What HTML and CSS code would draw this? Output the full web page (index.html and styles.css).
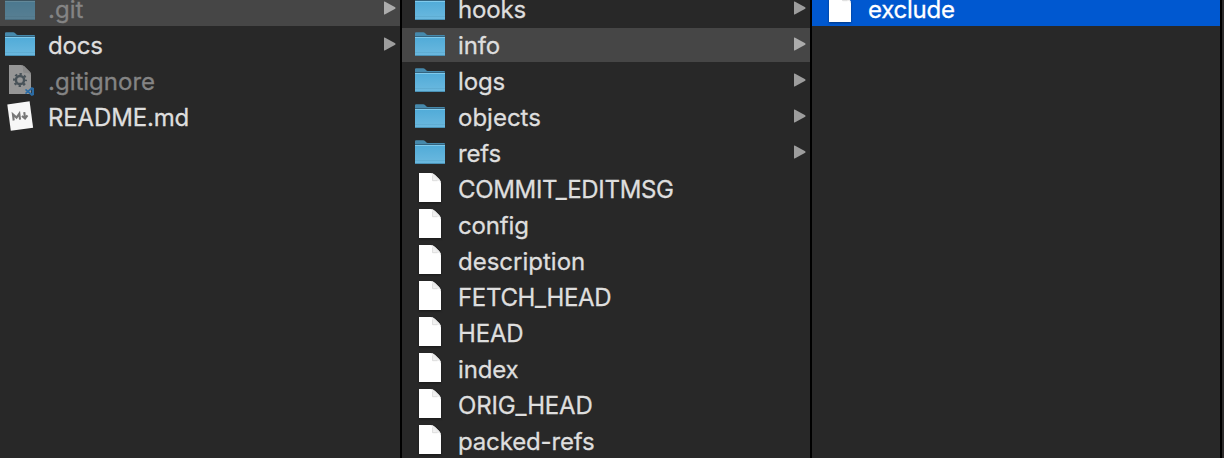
FILE: index.html
```
<!DOCTYPE html>
<html lang="en">
<head>
<meta charset="utf-8">
<title>Finder columns</title>
<link rel="stylesheet" href="styles.css">
</head>
<body>
<svg class="defs" aria-hidden="true">
  <defs>
    <linearGradient id="front" x1="0" y1="0" x2="0" y2="1"><stop offset="0" stop-color="#50abd8"/><stop offset="1" stop-color="#6cb9df"/></linearGradient>
    <linearGradient id="fold" x1="0" y1="1" x2="1" y2="0"><stop offset="0" stop-color="#fff"/><stop offset=".5" stop-color="#eee"/><stop offset="1" stop-color="#ccc"/></linearGradient>
  </defs>
  <symbol id="folder" viewBox="0 0 30 24">
    <path d="M0 1.2Q0 .2 1 .2H8.2Q9.2 .2 10 1L11.2 2.3Q11.8 2.9 12.8 2.9H29Q30 2.9 30 3.9V8H0Z" fill="#4689ac"/>
    <path d="M0 4H30V5H0Z" fill="#34647f"/>
    <path d="M0 5H30V23Q30 24 29 24H1Q0 24 0 23Z" fill="url(#front)"/>
    <path d="M0 5H30V6H0Z" fill="#7fcaec"/>
    <path d="M0 22.9H30V23Q30 24 29 24H1Q0 24 0 23Z" fill="#4a91b5"/>
    <path d="M0 20H30V20.6H0Z" fill="#5ba7cc"/>
  </symbol>
  <symbol id="file" viewBox="0 0 22 29">
    <path d="M0 0H11.5Q14 .1 16 2L20.3 6.3Q22 8 22 10.5V29H0Z" fill="#fff"/>
    <path d="M11.5 0Q14 .1 16 2L20.3 6.3Q21.8 7.8 22 10Q21 7.8 18.5 7.7H13.6V3Q13.6 .8 11.5 0Z" fill="url(#fold)"/>
    <path d="M13.6 2.5V7.7H18.5" fill="none" stroke="#d4d4d4" stroke-width=".8"/>
  </symbol>
  <symbol id="arrow" viewBox="0 0 12 14">
    <path d="M.7 .5L11.2 6.2Q12 7 11.2 7.8L.7 13.5Q0 13.8 0 13V1Q0 .2 .7 .5Z" fill="currentColor"/>
  </symbol>
</svg>
<main class="browser">
  <section class="column">
    <div class="row current"><span class="icon"><svg class="folder dim"><use href="#folder"/></svg></span><span class="name muted">.git</span><svg class="arrow"><use href="#arrow"/></svg></div>
    <div class="row"><span class="icon"><svg class="folder"><use href="#folder"/></svg></span><span class="name snug">docs</span><svg class="arrow"><use href="#arrow"/></svg></div>
    <div class="row"><span class="icon"><svg class="config" viewBox="0 0 26 32">
      <path d="M0 0H12Q14 0 15.5 1.5L21 7Q22 8.2 22 10V29H0Z" fill="#969696"/>
      <path d="M12 0Q14 0 15.5 1.5L21 7Q22 8.2 22 10Q20.5 8 18 8H16Q14 8 14 6V3Q14 1 12 0Z" fill="#8a8a8a"/>
      <g fill="none" stroke="#485258"><circle cx="11" cy="15" r="4.1" stroke-width="2.5"/><circle cx="11" cy="15" r="6" stroke-width="2" stroke-dasharray="2.36 2.352" stroke-dashoffset="1.18"/></g>
      <path d="M22.7 22L25 23.1V29.9L22.7 31L16.2 25.3V24.6L17.2 23.9L22.7 28.4V24.6L17.2 29.1L16.2 28.4V27.7Z" fill="#2a6ca6"/>
    </svg></span><span class="name muted">.gitignore</span></div>
    <div class="row"><span class="icon"><svg class="markdown" viewBox="0 0 28 31">
      <path d="M.3 3.4L22.6 .3L26.1 26.7L3.8 29.8Z" fill="#f7f7f7"/>
      <g transform="rotate(-7 13 15)" fill="none" stroke="#777" stroke-width="2.1"><path d="M6.2 18.7V12.6L9.4 16.2L12.6 12.6V18.7"/><path d="M17.7 11.6V17.5M14.9 15.2L17.7 18L20.5 15.2"/></g>
    </svg></span><span class="name snug">README.md</span></div>
  </section>
  <section class="column">
    <div class="row"><span class="icon"><svg class="folder"><use href="#folder"/></svg></span><span class="name snug">hooks</span><svg class="arrow"><use href="#arrow"/></svg></div>
    <div class="row current"><span class="icon"><svg class="folder"><use href="#folder"/></svg></span><span class="name snug">info</span><svg class="arrow"><use href="#arrow"/></svg></div>
    <div class="row"><span class="icon"><svg class="folder"><use href="#folder"/></svg></span><span class="name snug">logs</span><svg class="arrow"><use href="#arrow"/></svg></div>
    <div class="row"><span class="icon"><svg class="folder"><use href="#folder"/></svg></span><span class="name">objects</span><svg class="arrow"><use href="#arrow"/></svg></div>
    <div class="row"><span class="icon"><svg class="folder"><use href="#folder"/></svg></span><span class="name snug">refs</span><svg class="arrow"><use href="#arrow"/></svg></div>
    <div class="row"><span class="icon"><svg class="file"><use href="#file"/></svg></span><span class="name tight">COMMIT_EDITMSG</span></div>
    <div class="row"><span class="icon"><svg class="file"><use href="#file"/></svg></span><span class="name snug">config</span></div>
    <div class="row"><span class="icon"><svg class="file"><use href="#file"/></svg></span><span class="name">description</span></div>
    <div class="row"><span class="icon"><svg class="file"><use href="#file"/></svg></span><span class="name tight">FETCH_HEAD</span></div>
    <div class="row"><span class="icon"><svg class="file"><use href="#file"/></svg></span><span class="name snug">HEAD</span></div>
    <div class="row"><span class="icon"><svg class="file"><use href="#file"/></svg></span><span class="name snug">index</span></div>
    <div class="row"><span class="icon"><svg class="file"><use href="#file"/></svg></span><span class="name snug">ORIG_HEAD</span></div>
    <div class="row"><span class="icon"><svg class="file"><use href="#file"/></svg></span><span class="name snug">packed-refs</span></div>
  </section>
  <section class="column">
    <div class="row selected"><span class="icon"><svg class="file"><use href="#file"/></svg></span><span class="name">exclude</span></div>
  </section>
  <div class="edge"></div>
</main>
</body>
</html>
```

FILE: styles.css
```
* { box-sizing: border-box; }
body { margin: 0; background: #282828; overflow: hidden; }
.defs { position: absolute; width: 0; height: 0; }
.browser {
  display: grid;
  grid-template-columns: 402px 410px 410px 2px;
  height: 458px;
  overflow: hidden;
  background: #282828;
  color: #dedede;
  font: 400 24px/34px Inter, "Liberation Sans", sans-serif;
}
.column {
  display: flex;
  flex-direction: column;
  gap: 2px;
  height: 466px;
  margin-top: -8px;
  border-right: 2px solid #000;
}
.column:first-child .row { padding-left: 5px; }
.row {
  display: flex;
  flex: none;
  height: 34px;
  padding: 0 4px 0 13px;
}
.icon { display: flex; flex: none; width: 43px; }
.icon svg { flex: none; }
.name { white-space: nowrap; line-height: 36px; -webkit-text-stroke: .3px currentColor; }
.snug { letter-spacing: -.15px; }
.tight { letter-spacing: -.33px; }
.selected .name { letter-spacing: -.25px; }
.current { background: #464646; }
.selected { background: #0058d0; color: #fff; }
.muted { color: #848484; }
.folder { width: 30px; height: 24px; margin-top: 4px; }
.dim { opacity: .5; }
.file { width: 22px; height: 29px; margin: 1px 0 0 4px; filter: drop-shadow(0 1px 1px rgba(0, 0, 0, .4)); }
.config { width: 26px; height: 32px; margin: 1px 0 0 4px; }
.markdown { width: 28px; height: 31px; margin: 1px 0 0 2px; }
.arrow { width: 12px; height: 14px; margin: 9px 0 0 auto; color: #9d9d9d; }
.current .arrow { color: #acacac; }
.edge { background: #2d2b2b; }
```
